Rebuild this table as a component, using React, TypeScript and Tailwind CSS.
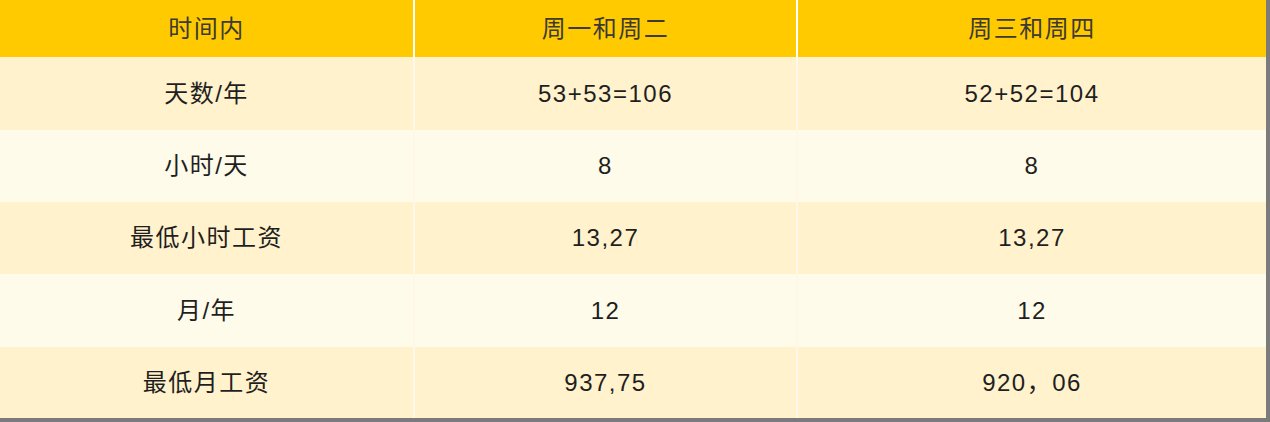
const rows = [
  { label: "天数/年", a: "53+53=106", b: "52+52=104", h: "h-[73px]" },
  { label: "小时/天", a: "8", b: "8", h: "h-[72px]" },
  { label: "最低小时工资", a: "13,27", b: "13,27", h: "h-[72px]" },
  { label: "月/年", a: "12", b: "12", h: "h-[73px]" },
  { label: "最低月工资", a: "937,75", b: "920，06", h: "h-[71px]" },
];

export default function App() {
  return (
    <div className="w-[1270px] h-[422px] bg-[#7b7b7b] font-['Liberation_Sans','Noto_Sans_CJK_SC',sans-serif]">
      <div className="w-[1266px] h-[418px] bg-white flex flex-col text-[24px] tracking-[1.5px]">
        <div className="grid grid-cols-[413px_381px_468px] gap-x-[2px] h-[57px] text-[#3c3a33]">
          <div className="bg-[#ffcb00] flex items-center justify-center">时间内</div>
          <div className="bg-[#ffcb00] flex items-center justify-center">周一和周二</div>
          <div className="bg-[#ffcb00] flex items-center justify-center">周三和周四</div>
        </div>
        {rows.map((r, i) => {
          const bg = i % 2 === 0 ? "bg-[#fff2cc]" : "bg-[#fffbea]";
          return (
            <div
              key={r.label}
              className={`grid grid-cols-[413px_381px_468px] gap-x-[2px] ${r.h} text-[#1f1f1f] bg-[#fff8e8]`}
            >
              <div className={`${bg} flex items-center justify-center`}>{r.label}</div>
              <div className={`${bg} flex items-center justify-center`}>{r.a}</div>
              <div className={`${bg} flex items-center justify-center`}>{r.b}</div>
            </div>
          );
        })}
      </div>
    </div>
  );
}
